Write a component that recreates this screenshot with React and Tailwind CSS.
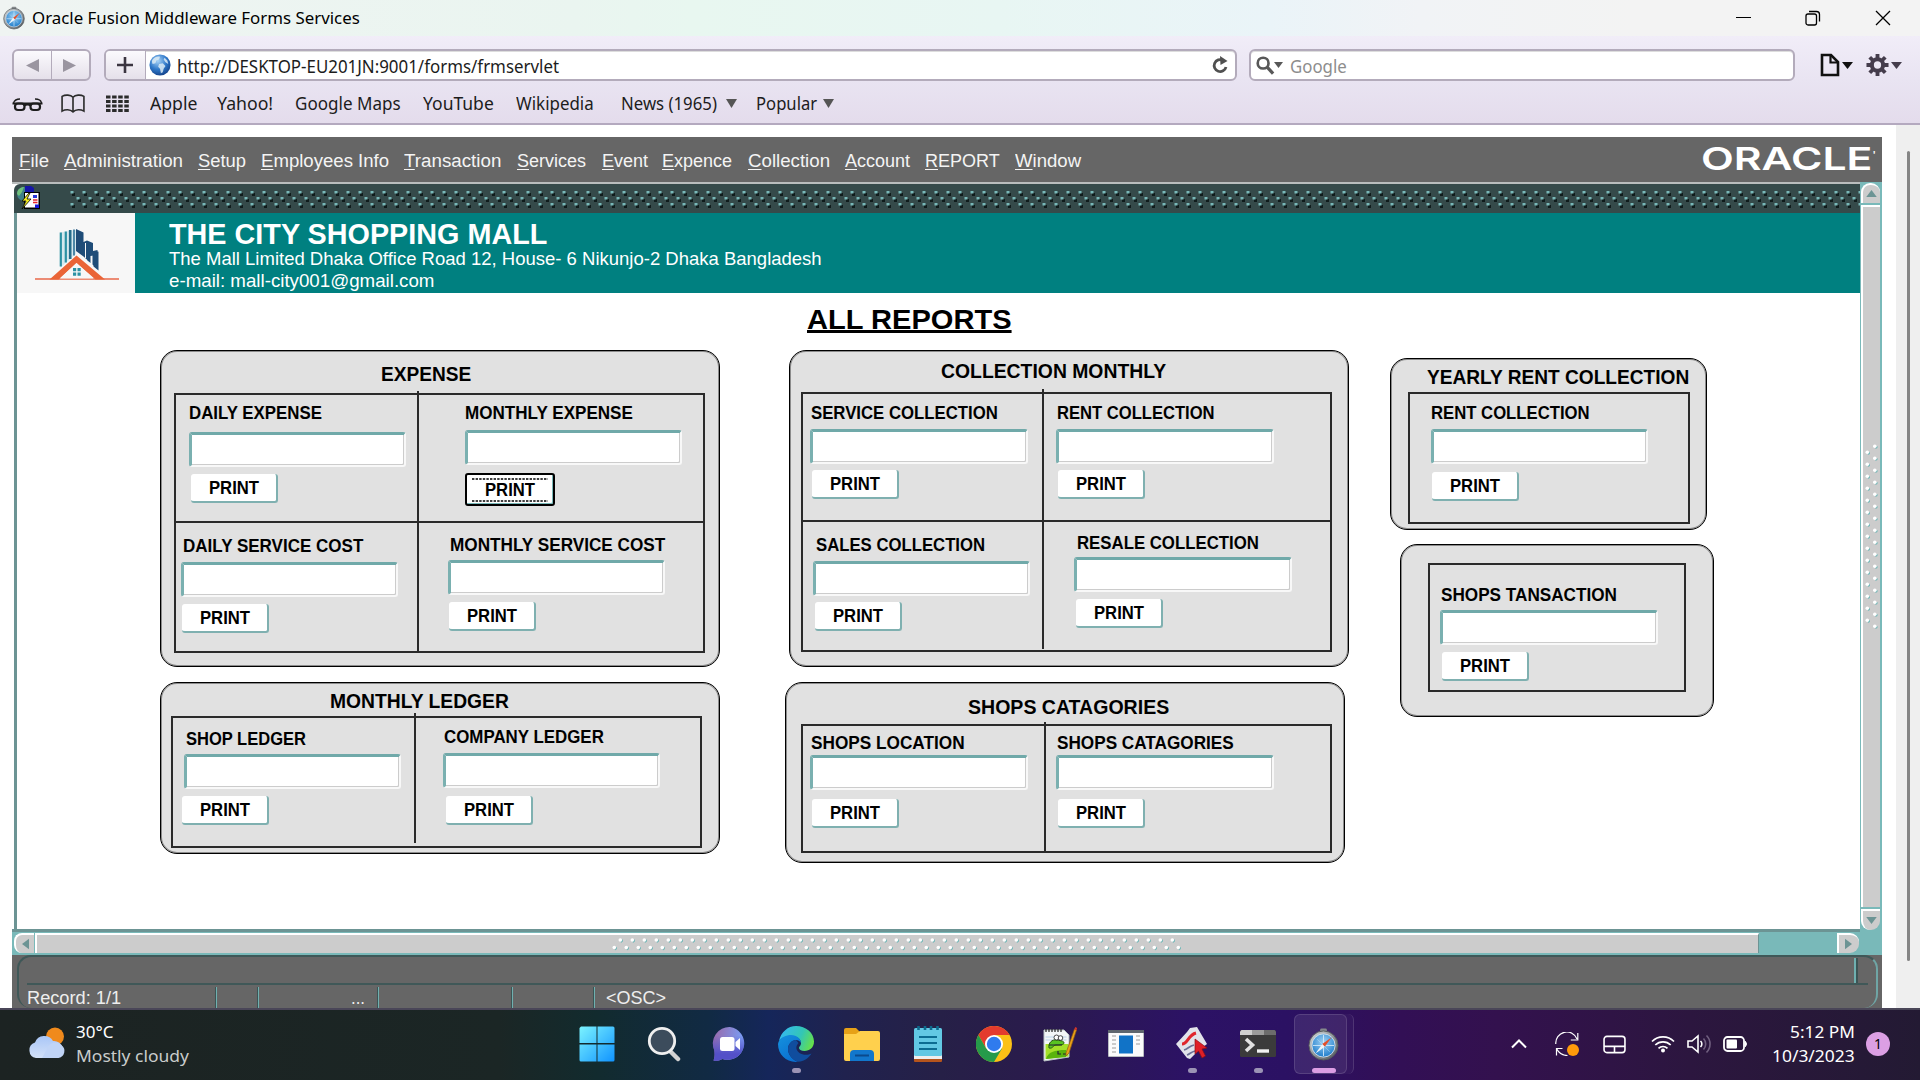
import React, { useLayoutEffect, useRef, useState } from "react";

/* Text condensed or stretched horizontally to fill the width of its box. */
function Fit({ className = "", children }) {
  const box = useRef(null);
  const text = useRef(null);
  const [scale, setScale] = useState(1);
  useLayoutEffect(() => {
    const natural = text.current.offsetWidth;
    if (natural) setScale(box.current.clientWidth / natural);
  }, []);
  return (
    <span ref={box} className={"block shrink-0 " + className}>
      <span ref={text} className="inline-block origin-left whitespace-pre" style={{ transform: `scaleX(${scale})` }}>
        {children}
      </span>
    </span>
  );
}

const Caret = ({ className = "" }) => (
  <svg viewBox="0 0 10 8" preserveAspectRatio="none" className={"shrink-0 " + className}>
    <path d="M0 0h10L5 8z" fill="currentColor" />
  </svg>
);

function Compass({ className }) {
  return (
    <svg viewBox="0 0 32 34" className={className}>
      <defs>
        <radialGradient id="compassBlue" cx="50%" cy="35%" r="65%">
          <stop offset="0" stopColor="#9fd2f4" />
          <stop offset="1" stopColor="#1f7dcb" />
        </radialGradient>
        <linearGradient id="compassRim" x1="0" y1="0" x2="1" y2="1">
          <stop offset="0" stopColor="#d8dcde" />
          <stop offset="1" stopColor="#4c5257" />
        </linearGradient>
      </defs>
      <rect x="12.500" y="0.500" width="7" height="4" rx="1.500" fill="#85898c" />
      <circle cx="16" cy="18" r="15" fill="url(#compassRim)" stroke="#55595c" strokeWidth="1" />
      <circle cx="16" cy="18" r="12" fill="url(#compassBlue)" stroke="#e9eef2" strokeWidth="0.800" />
      <path d="M16 7v22M5 18h22" stroke="#d6ecfa" strokeWidth="0.900" />
      <path d="M9.500 11.500l13 13M22.500 11.500l-13 13" stroke="#bfe0f5" strokeWidth="0.500" />
      <path d="M24.500 9.500l-7.200 9.700-2.600-2.600z" fill="#e2502c" />
      <path d="M7.500 26.500l7.200-9.700 2.600 2.600z" fill="#eef4f8" />
    </svg>
  );
}

function Globe() {
  return (
    <svg viewBox="0 0 24 24" className="h-[22px] w-[22px] shrink-0">
      <defs>
        <radialGradient id="globe" cx="40%" cy="30%" r="75%">
          <stop offset="0" stopColor="#a9d4f7" />
          <stop offset="0.550" stopColor="#2f78c9" />
          <stop offset="1" stopColor="#123f86" />
        </radialGradient>
      </defs>
      <circle cx="12" cy="12" r="11.500" fill="url(#globe)" />
      <path d="M4 6c2-3 6-4 8-3l-1 3-3 1-1 3-3 1c-1-2-1-4 0-5zM11 11l4-1 3 3-2 3-1 4-2 1-1-5-2-2zM17 4l3 3 1 4-3-2-2-3z" fill="#dcebf4" opacity="0.850" />
    </svg>
  );
}

function TitleBar() {
  return (
    <div className="flex h-[36px] items-center bg-[linear-gradient(90deg,#eff4f2_0%,#eaf5f0_30%,#e8f7f0_36%,#e8f6f3_52%,#eaf4f8_66%,#f1f3f6_74%,#f3f3f3_85%)] pl-[3px]">
      <Compass className="h-[24px] w-[22px]" />
      <Fit className="-mt-px ml-[7px] w-[328px] text-[16.5px] leading-[24px] text-black">Oracle Fusion Middleware Forms Services</Fit>
      <div className="ml-auto flex items-center text-black">
        <svg viewBox="0 0 16 16" className="h-[16px] w-[16px]"><path d="M0 7.500h15" stroke="#000" strokeWidth="1" /></svg>
        <svg viewBox="0 0 16 16" className="-mt-px ml-[53px] h-[16px] w-[16px]" fill="none" stroke="#000" strokeWidth="1.300">
          <rect x="1" y="4" width="10.500" height="11" rx="2" />
          <path d="M4 1.500h7.500a3 3 0 0 1 3 3v7" />
        </svg>
        <svg viewBox="0 0 16 16" className="-mt-px ml-[54px] mr-[29px] h-[16px] w-[16px]" stroke="#000" strokeWidth="1.300"><path d="M1 1l14 14M15 1L1 15" /></svg>
      </div>
    </div>
  );
}

function BrowserBar() {
  return (
    <div className="flex h-[89px] flex-col border-b-2 border-[#b4a9bf] bg-[linear-gradient(180deg,#f1edf8_0%,#e9e4f2_50%,#e4dcec_100%)] pt-[13px]">
      <div className="flex h-[32px] items-stretch pl-[12px]">
        <div className="flex w-[79px] rounded-[6px] border-2 border-[#b3abbb] bg-[linear-gradient(180deg,#fbfafd,#e5e0ea)] text-[#9a95a0]">
          <div className="flex flex-1 items-center justify-center border-r border-[#b3abbb]">
            <svg viewBox="0 0 12 12" className="h-[13px] w-[13px]"><path d="M12 0v12L0 6z" fill="currentColor" /></svg>
          </div>
          <div className="flex flex-1 items-center justify-center">
            <svg viewBox="0 0 12 12" className="-ml-[2px] h-[13px] w-[13px]"><path d="M0 0v12l12-6z" fill="currentColor" /></svg>
          </div>
        </div>
        <div className="ml-[13px] flex w-[1133px] items-center overflow-hidden rounded-[6px] border-2 border-[#b3abbb] bg-white shadow-[inset_0_1px_0_#dddddd]">
          <div className="flex h-full w-[40px] shrink-0 items-center justify-center border-r border-[#b3abbb] bg-[linear-gradient(180deg,#fbfafd,#e5e0ea)]">
            <svg viewBox="0 0 16 16" className="-ml-[2px] h-[16px] w-[16px]"><path d="M8 0v16M0 8h16" stroke="#3b3540" strokeWidth="2.600" /></svg>
          </div>
          <div className="ml-[3px]"><Globe /></div>
          <Fit className="ml-[6px] mt-px w-[382px] text-[18px] leading-[24px] text-[#1c1c1c]">http://DESKTOP-EU201JN:9001/forms/frmservlet</Fit>
          <svg viewBox="0 0 16 18" className="ml-auto mr-[7px] h-[18px] w-[16px]" fill="none">
            <path d="M11 4.300A6 6 0 1 0 14 11" stroke="#505050" strokeWidth="2.800" />
            <path d="M8 0L15.500 5 8.500 9z" fill="#505050" />
          </svg>
        </div>
        <div className="ml-[12px] flex w-[546px] items-center rounded-[6px] border-2 border-[#b3abbb] bg-white pl-[5px] shadow-[inset_0_1px_0_#dddddd]">
          <svg viewBox="0 0 20 20" className="h-[19px] w-[19px]" fill="none" stroke="#585858">
            <circle cx="7.500" cy="7.500" r="5.700" strokeWidth="2.800" />
            <path d="M11.500 11.500L18 18.500" strokeWidth="3.400" />
          </svg>
          <Caret className="-ml-px h-[6px] w-[9px] text-[#585858]" />
          <Fit className="ml-[7px] mt-px w-[57px] text-[18px] leading-[24px] text-[#8d8d8d]">Google</Fit>
        </div>
        <div className="ml-[25px] flex items-center">
          <svg viewBox="0 0 20 24" className="h-[24px] w-[20px]" fill="none" stroke="#111" strokeWidth="2.600">
            <path d="M2 2h9l7 7v13H2z" />
            <path d="M10.500 2v7.500H18" strokeWidth="2.200" />
          </svg>
          <Caret className="ml-[2px] h-[7px] w-[11px] text-[#111]" />
          <svg viewBox="0 0 24 24" className="ml-[13px] h-[24px] w-[23px]">
            <g stroke="#453d4c" strokeWidth="4">
              <path d="M12 0.500v23M0.500 12h23M3.900 3.900l16.200 16.200M20.100 3.900L3.900 20.100" />
            </g>
            <circle cx="12" cy="12" r="8" fill="#453d4c" />
            <circle cx="12" cy="12" r="3.800" fill="#ece8f4" />
          </svg>
          <Caret className="ml-[2px] h-[7px] w-[11px] text-[#453d4c]" />
        </div>
      </div>
      <div className="mt-[10px] flex h-[24px] items-center pl-[12px] text-[18px] leading-[24px] text-[#1c1c1c]">
        <svg viewBox="0 0 31 16" className="mt-[2px] h-[16px] w-[31px]" fill="none" stroke="#1d1d1d" strokeWidth="2.200">
          <rect x="3" y="7.500" width="9.500" height="6.500" rx="3" />
          <rect x="18.500" y="7.500" width="9.500" height="6.500" rx="3" />
          <path d="M0.500 7.500h30M12.500 9.500c1.500-1.300 4.500-1.300 6 0" strokeWidth="2" />
          <path d="M1.500 7C2.500 4 4.500 3 8 3M29.500 7C29 4 27 3 23 3" strokeWidth="1.300" />
        </svg>
        <svg viewBox="0 0 26 20" className="ml-[17px] h-[19px] w-[26px]" fill="none" stroke="#2b2b2b" strokeWidth="1.700">
          <path d="M13 3.500C10.500 0.800 5 0.500 1.500 2.500v15.500c3.500-2 8.500-2 11.500 0.800 3-2.800 8-2.800 11.500-0.800V2.500C21 0.500 15.500 0.800 13 3.500zM13 3.500v15" />
        </svg>
        <svg viewBox="0 0 23 17" className="ml-[20px] mt-px h-[17px] w-[23px]">
          <path d="M0 2h23M0 6.500h23M0 11h23M0 15.500h23" stroke="#2b2b2b" strokeWidth="3.200" strokeDasharray="4.500 1.600" />
        </svg>
        <Fit className="ml-[21px] w-[47px]">Apple</Fit>
        <Fit className="ml-[20px] w-[56px]">Yahoo!</Fit>
        <Fit className="ml-[22px] w-[106px]">Google Maps</Fit>
        <Fit className="ml-[22px] w-[71px]">YouTube</Fit>
        <Fit className="ml-[22px] w-[78px]">Wikipedia</Fit>
        <Fit className="ml-[27px] w-[96px]">News (1965)</Fit>
        <Caret className="ml-[9px] h-[9px] w-[11px] text-[#555]" />
        <Fit className="ml-[19px] w-[61px]">Popular</Fit>
        <Caret className="ml-[6px] h-[9px] w-[11px] text-[#555]" />
      </div>
    </div>
  );
}

const MENU = [
  ["File", "ml-[7px] w-[30px]"],
  ["Administration", "ml-[15px] w-[119px]"],
  ["Setup", "ml-[15px] w-[48px]"],
  ["Employees Info", "ml-[15px] w-[128px]"],
  ["Transaction", "ml-[15px] w-[97px]"],
  ["Services", "ml-[16px] w-[69px]"],
  ["Event", "ml-[16px] w-[46px]"],
  ["Expence", "ml-[14px] w-[70px]"],
  ["Collection", "ml-[16px] w-[82px]"],
  ["Account", "ml-[15px] w-[65px]"],
  ["REPORT", "ml-[15px] w-[75px]"],
  ["Window", "ml-[15px] w-[66px]"],
];

function MenuBar() {
  return (
    <div className="flex h-[45px] bg-[#666666] pt-[12px] text-[18px] leading-[24px] text-[#f4f4f4] [font-family:'Liberation_Sans',sans-serif]">
      {MENU.map(([name, cls]) => (
        <Fit key={name} className={cls}>
          <span className="underline decoration-1 underline-offset-2">{name[0]}</span>
          {name.slice(1)}
        </Fit>
      ))}
      <Fit className="ml-auto -mt-[6px] w-[172px] text-[31.5px] font-semibold leading-[32px] text-white [font-family:Inter,sans-serif]">ORACLE</Fit>
      <span className="-mt-[3px] mr-[4px] w-[5px] text-[10px] font-bold leading-[20px] text-white">'</span>
    </div>
  );
}

function StripDots() {
  return (
    <svg className="h-[18px] w-[1790px]">
      <defs>
        <pattern id="stripDots" width="12" height="18" patternUnits="userSpaceOnUse">
          <path d="M2 3h3v3H2zM2 15h3v3H2zM8 9h3v3H8z" fill="#101c1c" />
          <path d="M0.500 1h3v2.500h-3zM0.500 13h3v2.500h-3zM6.500 7h3v2.500h-3z" fill="#79b9b9" />
        </pattern>
      </defs>
      <rect width="1790" height="18" fill="url(#stripDots)" />
    </svg>
  );
}

function MallLogo() {
  return (
    <svg viewBox="0 0 118 80" className="h-[80px] w-[118px] shrink-0 bg-[#f7f7f7]">
      <path d="M43.500 19.500v35L59 41V17l-5 0.500-5 1z" fill="#d5e8ee" />
      <path d="M43.800 19.500v34M48.800 18.500v31" stroke="#2c91a3" strokeWidth="2.200" />
      <path d="M53.200 17v29" stroke="#246d8c" strokeWidth="2.600" />
      <path d="M57 16.500v26" stroke="#2a6f96" strokeWidth="1.600" />
      <path d="M59 16l7.500 3.500v9.500l3.500-1.500 6 2.500v9.500l4.500-1.500V56l-5-4.500V41l-3.500 2v5.500l-5.500-5-7.500-5.500z" fill="#1f4c78" />
      <path d="M70 33l6-1v6l4.500-1 0 2 1-0.500v19l-5-4V42.500l-3 0.500v7l-3.500-3z" fill="#1f4c78" />
      <path d="M68.500 30v15" stroke="#f7f7f7" strokeWidth="1" />
      <path d="M18 66h84" stroke="#e8694a" strokeWidth="1.500" />
      <path d="M59.500 42.500L88 66.500H78.500L59.500 50 41.500 66.500H32.500z" fill="#ea6437" />
      <path d="M59.500 50l17 15.500H43z" fill="#f7f7f7" />
      <path d="M56 55h3.200v3.200H56zM60.500 55h3.200v3.200h-3.200zM56 59.500h3.200v3.200H56zM60.500 59.500h3.200v3.200h-3.200z" fill="#2c91a3" />
    </svg>
  );
}

function AppletIcon() {
  return (
    <svg viewBox="0 0 25 25" className="ml-[2px] h-[25px] w-[25px] shrink-0">
      <circle cx="8" cy="8" r="7" fill="#3e7f86" />
      <path d="M1 8c0-5 4-7 7-7l-2 5-3 4z" fill="#6fc07c" />
      <path d="M9 0h6l3 2v4H9z" fill="#1616a8" />
      <rect x="8" y="6" width="16" height="17" fill="#000" />
      <rect x="9" y="7" width="13.500" height="14.500" fill="#fff" />
      <path d="M17 9h4v3h-4z" fill="#2a37d8" />
      <path d="M17 14h4.500M17 16.500h4.500" stroke="#e8262c" strokeWidth="1.300" />
      <path d="M19 18.500h4V22h-4z" fill="#1616d8" />
      <path d="M13 7l-7 8h4l-4 8 9-10h-4l3-6z" fill="#f3ec1c" stroke="#000" strokeWidth="0.800" />
    </svg>
  );
}

const FocusLine = () => (
  <svg viewBox="0 0 76 2" className="h-[2px] w-[76px]">
    <path d="M0 1h76" stroke="#000" strokeWidth="1.500" strokeDasharray="2.400 1.200" />
  </svg>
);

function PrintButton({ className, focused }) {
  if (focused) {
    return (
      <button className={"flex h-[33px] w-[90px] flex-col items-center rounded-[3px] border-2 border-black bg-white pt-[3px] shadow-[inset_-1px_-1px_0_#79b9b9] " + className}>
        <FocusLine />
        <Fit className="w-[50px] text-[19px] font-bold leading-[20px]">PRINT</Fit>
        <FocusLine />
      </button>
    );
  }
  return (
    <button className={"flex h-[29px] w-[87px] items-center justify-center rounded-[3px] border-b-2 border-r-2 border-[#7fb0b0] bg-white pt-px " + className}>
      <Fit className="w-[50px] text-[19px] font-bold leading-[20px]">PRINT</Fit>
    </button>
  );
}

/* One report: caption, parameter field and its print button. */
function Entry({ label, labelClass, fieldClass, buttonClass, focused }) {
  return (
    <div className="flex flex-col items-start">
      <Fit className={"text-[19px] font-bold leading-[20px] " + labelClass}>{label}</Fit>
      <div className={"h-[35px] w-[217px] rounded-[3px] border-b-2 border-l-[3px] border-r-2 border-t-[3px] border-b-[#f8f8f8] border-l-[#7ab0b0] border-r-[#f8f8f8] border-t-[#70a9a9] bg-white shadow-[inset_-1px_-1px_0_#cccccc] " + fieldClass} />
      <PrintButton className={buttonClass} focused={focused} />
    </div>
  );
}

function Panel({ className, title, titleClass, gridClass, lineClass, children }) {
  return (
    <section className={"flex flex-col items-start rounded-[17px] border border-black bg-[#e1e1e1] p-px shadow-[inset_0_0_0_1px_#8c8c8c] " + className}>
      {title && <Fit className={"relative -top-px text-[21px] font-bold leading-[24px] " + titleClass}>{title}</Fit>}
      <div className={"relative grid border-2 border-[#2a2a2a] " + gridClass}>
        {children}
        {lineClass && <span className={"absolute w-[2px] bg-[#2a2a2a] " + lineClass} />}
      </div>
    </section>
  );
}

const RowLine = ({ className }) => <span className={"absolute left-0 h-[2px] w-full bg-[#2a2a2a] " + className} />;

function Reports() {
  return (
    <div className="mt-[15px] flex items-start">
      <div className="ml-[143px] flex flex-col gap-[15px]">
        <Panel className="h-[317px] w-[560px]" title="EXPENSE" titleClass="ml-[219px] mt-[11px] w-[90px]" gridClass="ml-[12px] mt-[6px] h-[260px] w-[531px] grid-cols-[242px_1fr] grid-rows-[126px_1fr]" lineClass="left-[241px] -top-[4px] bottom-0">
          <Entry label="DAILY EXPENSE" labelClass="ml-[13px] mt-[8px] w-[133px]" fieldClass="ml-[13px] mt-[9px]" buttonClass="ml-[15px] mt-[7px]" />
          <Entry focused label="MONTHLY EXPENSE" labelClass="ml-[47px] mt-[8px] w-[168px]" fieldClass="ml-[47px] mt-[7px]" buttonClass="ml-[47px] mt-[8px]" />
          <Entry label="DAILY SERVICE COST" labelClass="ml-[7px] mt-[15px] w-[180px]" fieldClass="ml-[5px] mt-[6px]" buttonClass="ml-[6px] mt-[7px]" />
          <Entry label="MONTHLY SERVICE COST" labelClass="ml-[32px] mt-[14px] w-[215px]" fieldClass="ml-[30px] mt-[5px]" buttonClass="ml-[31px] mt-[7px]" />
          <RowLine className="top-[126px]" />
        </Panel>
        <Panel className="h-[172px] w-[560px]" title="MONTHLY LEDGER" titleClass="ml-[168px] mt-[6px] w-[179px]" gridClass="ml-[9px] mt-[2px] h-[132px] w-[531px] grid-cols-[241px_1fr]" lineClass="left-[241px] -top-[5px] bottom-[3px]">
          <Entry label="SHOP LEDGER" labelClass="ml-[13px] mt-[11px] w-[120px]" fieldClass="ml-[11px] mt-[5px]" buttonClass="ml-[9px] mt-[7px]" />
          <Entry label="COMPANY LEDGER" labelClass="ml-[30px] mt-[9px] w-[160px]" fieldClass="ml-[29px] mt-[6px]" buttonClass="ml-[32px] mt-[8px]" />
        </Panel>
      </div>
      <div className="ml-[65px] flex flex-col gap-[15px]">
        <Panel className="ml-[4px] h-[317px] w-[560px]" title="COLLECTION MONTHLY" titleClass="ml-[150px] mt-[8px] w-[225px]" gridClass="ml-[10px] mt-[8px] h-[260px] w-[531px] grid-cols-[240px_1fr] grid-rows-[125px_1fr]" lineClass="left-[239px] -top-[5px] bottom-[1px]">
          <Entry label="SERVICE COLLECTION" labelClass="ml-[8px] mt-[9px] w-[187px]" fieldClass="ml-[7px] mt-[6px] w-[218px]" buttonClass="ml-[9px] mt-[6px]" />
          <Entry label="RENT COLLECTION" labelClass="ml-[14px] mt-[9px] w-[158px]" fieldClass="ml-[13px] mt-[6px] w-[218px]" buttonClass="ml-[15px] mt-[6px]" />
          <Entry label="SALES COLLECTION" labelClass="ml-[13px] mt-[16px] w-[169px]" fieldClass="ml-[10px] mt-[6px]" buttonClass="ml-[12px] mt-[6px]" />
          <Entry label="RESALE COLLECTION" labelClass="ml-[34px] mt-[14px] w-[182px]" fieldClass="ml-[31px] mt-[4px] w-[218px]" buttonClass="ml-[33px] mt-[7px]" />
          <RowLine className="top-[126px]" />
        </Panel>
        <Panel className="h-[181px] w-[560px]" title="SHOPS CATAGORIES" titleClass="ml-[181px] mt-[12px] w-[201px]" gridClass="ml-[14px] mt-[4px] h-[129px] w-[531px] grid-cols-[241px_1fr]" lineClass="left-[241px] -top-[4px] bottom-0">
          <Entry label="SHOPS LOCATION" labelClass="ml-[8px] mt-[7px] w-[154px]" fieldClass="ml-[7px] mt-[2px] w-[218px]" buttonClass="ml-[9px] mt-[9px]" />
          <Entry label="SHOPS CATAGORIES" labelClass="ml-[13px] mt-[7px] w-[177px]" fieldClass="ml-[12px] mt-[2px] w-[218px]" buttonClass="ml-[14px] mt-[9px]" />
        </Panel>
      </div>
      <div className="ml-[41px] flex flex-col gap-[14px] pt-[8px]">
        <Panel className="h-[172px] w-[317px]" title="YEARLY RENT COLLECTION" titleClass="ml-[35px] mt-[6px] w-[262px]" gridClass="ml-[16px] mt-[2px] h-[132px] w-[282px]">
          <Entry label="RENT COLLECTION" labelClass="ml-[21px] mt-[9px] w-[159px]" fieldClass="ml-[21px] mt-[6px]" buttonClass="ml-[22px] mt-[8px]" />
        </Panel>
        <Panel className="ml-[10px] h-[173px] w-[314px]" gridClass="ml-[26px] mt-[17px] h-[129px] w-[258px]">
          <Entry label="SHOPS TANSACTION" labelClass="ml-[11px] mt-[20px] w-[176px]" fieldClass="ml-[10px] mt-[5px] w-[218px]" buttonClass="ml-[12px] mt-[7px]" />
        </Panel>
      </div>
    </div>
  );
}

function FormWindow() {
  return (
    <div className="flex h-[750px] w-[1848px] flex-col border-b-[3px] border-t-2 border-b-[#6c9494] border-t-[#b9bdbd]">
      <div className="ml-[2px] flex h-[29px] shrink-0 items-center overflow-hidden rounded-tl-[6px] bg-[#354a4a]">
        <AppletIcon />
        <div className="ml-[29px] flex"><StripDots /></div>
      </div>
      <div className="ml-[2px] flex flex-1 flex-col border-l-[3px] border-[#6c9494] bg-white">
        <header className="flex h-[80px] bg-[#008080] text-white">
          <MallLogo />
          <div className="flex flex-col pl-[34px] pt-[4px]">
            <Fit className="w-[378px] text-[29px] font-bold leading-[34px]">THE CITY SHOPPING MALL</Fit>
            <Fit className="-mt-[3px] w-[653px] text-[18.5px] leading-[22px]">The Mall Limited Dhaka Office Road 12, House- 6 Nikunjo-2 Dhaka Bangladesh</Fit>
            <Fit className="w-[265px] text-[18.5px] leading-[22px]">e-mail: mall-city001@gmail.com</Fit>
          </div>
        </header>
        <Fit className="ml-[790px] mt-[10px] h-[32px] w-[205px] text-[28.5px] font-bold leading-[32px]">
          <span className="underline decoration-[3px] underline-offset-[1px] [text-decoration-skip-ink:none]">ALL REPORTS</span>
        </Fit>
        <Reports />
      </div>
    </div>
  );
}

function Knurl({ vertical }) {
  return vertical ? (
    <svg className="h-[185px] w-[14px]">
      <defs>
        <pattern id="knurlV" width="14" height="12" patternUnits="userSpaceOnUse">
          <path d="M10 2l2.500 0v2l-2 1zM2.500 8l2.500 0v2l-2 1z" fill="#79b9b9" />
          <circle cx="9.800" cy="2.300" r="1.800" fill="#fff" />
          <circle cx="2.300" cy="8.300" r="1.800" fill="#fff" />
        </pattern>
      </defs>
      <rect width="14" height="185" fill="url(#knurlV)" />
    </svg>
  ) : (
    <svg className="h-[14px] w-[570px]">
      <defs>
        <pattern id="knurlH" width="12" height="14" patternUnits="userSpaceOnUse">
          <path d="M8 3l3-0.500v2l-2 1.500zM2 10.500l3-0.500v2l-2 1.500z" fill="#79b9b9" />
          <circle cx="8.300" cy="3" r="1.800" fill="#fff" />
          <circle cx="2.300" cy="10.500" r="1.800" fill="#fff" />
        </pattern>
      </defs>
      <rect width="570" height="14" fill="url(#knurlH)" />
    </svg>
  );
}

function VerticalScroll() {
  return (
    <div className="flex h-[750px] w-[22px] flex-col border-x border-[#79b9b9] bg-[#79b9b9] pr-px pt-px">
      <div className="flex h-[20px] items-center justify-center rounded-t-[9px] border-l-2 border-t-2 border-white bg-[#cccccc]">
        <svg viewBox="0 0 12 8" className="-mt-px h-[7px] w-[11px]"><path d="M0 8h12L6 0z" fill="#6c9494" /></svg>
      </div>
      <div className="mt-[2px] flex h-[702px] items-center justify-center border-l-2 border-t-2 border-white bg-[#cccccc]">
        <div className="-mt-[41px] flex"><Knurl vertical /></div>
      </div>
      <div className="mt-[2px] flex h-[21px] items-center justify-center rounded-b-[9px] border-l-2 border-t-2 border-white bg-[#cccccc]">
        <svg viewBox="0 0 12 8" className="h-[7px] w-[11px]"><path d="M0 0h12L6 8z" fill="#6c9494" /></svg>
      </div>
    </div>
  );
}

function HorizontalScroll() {
  return (
    <div className="flex h-[23px] items-stretch bg-[#79b9b9] pb-[2px] pl-[2px] pt-px">
      <div className="flex w-[20px] items-center justify-center rounded-l-[8px] border-l-2 border-t-2 border-white bg-[#cccccc]">
        <svg viewBox="0 0 8 12" className="h-[12px] w-[7px]"><path d="M8 0v12L0 6z" fill="#6c9494" /></svg>
      </div>
      <div className="ml-px flex w-[1724px] items-center border-l-2 border-r border-t-2 border-l-white border-r-[#6c9494] border-t-white bg-[#cccccc]">
        <div className="ml-[575px] flex"><Knurl /></div>
      </div>
      <div className="ml-[78px] flex w-[22px] items-center justify-center rounded-r-[9px] border-l-2 border-t-2 border-white bg-[#cccccc]">
        <svg viewBox="0 0 8 12" className="-ml-[2px] h-[12px] w-[7px]"><path d="M0 0v12l8-6z" fill="#6c9494" /></svg>
      </div>
    </div>
  );
}

const Cell = ({ className, children }) => (
  <div className={"flex h-full border-r border-[#6fb0b0] shadow-[inset_-1px_0_0_#3c5454] " + className}>{children}</div>
);

function StatusBar() {
  return (
    <div className="flex h-[53px] bg-[#666666] pl-[5px] pr-[4px] text-[18px] leading-[24px] text-[#eeeeee]">
      <div className="flex flex-1 flex-col rounded-[14px] border-2 border-b-0 border-[#3f5858] border-r-[#6fa5a5] px-[8px]">
        <div className="flex h-[28px] items-stretch justify-end border-b-2 border-[#405858] pr-[10px] pt-px">
          <span className="w-[4px] border-l-2 border-r-2 border-l-[#6fb0b0] border-r-[#3c5454]" />
        </div>
        <div className="flex h-[23px] items-stretch pt-[2px]">
          <Cell className="w-[190px]"><Fit className="w-[94px] leading-[22px]">Record: 1/1</Fit></Cell>
          <Cell className="w-[42px]" />
          <Cell className="w-[120px] justify-end pr-[13px]"><Fit className="w-[14px] leading-[22px]">...</Fit></Cell>
          <Cell className="w-[134px]" />
          <Cell className="w-[82px]" />
          <Fit className="ml-[11px] w-[60px] leading-[22px]">&lt;OSC&gt;</Fit>
        </div>
      </div>
    </div>
  );
}

const StartIcon = () => (
  <svg viewBox="0 0 36 36" className="h-[36px] w-[36px]">
    <defs>
      <linearGradient id="win" gradientUnits="userSpaceOnUse" x1="0" y1="0" x2="36" y2="36">
        <stop offset="0" stopColor="#7df5ff" />
        <stop offset="1" stopColor="#0f92ff" />
      </linearGradient>
    </defs>
    <path d="M2 0.500h15.500v16.500H0.500V2zM18.500 0.500H34q1.500 0 1.500 1.500v15h-17zM0.500 18.500h17v17H2q-1.500 0-1.500-1.500zM18.500 18.500h17V34q0 1.500-1.500 1.500H18.500z" fill="url(#win)" />
  </svg>
);
const SearchIcon = () => (
  <svg viewBox="0 0 36 36" className="h-[36px] w-[36px]" fill="none">
    <path d="M24 25l8 8" stroke="#d2d2d2" strokeWidth="4.500" strokeLinecap="round" />
    <circle cx="16" cy="15" r="12.700" fill="#3c4c5c" stroke="#efefef" strokeWidth="2.800" />
  </svg>
);
const ChatIcon = () => (
  <svg viewBox="0 0 36 36" className="h-[36px] w-[36px]">
    <defs>
      <linearGradient id="chat" x1="0" y1="0.100" x2="0.900" y2="0.300">
        <stop offset="0" stopColor="#9a68a8" />
        <stop offset="1" stopColor="#7b9af0" />
      </linearGradient>
      <linearGradient id="chatLow" x1="0" y1="0" x2="0" y2="1">
        <stop offset="0.250" stopColor="#5050c8" stopOpacity="0" />
        <stop offset="0.800" stopColor="#5450c8" />
      </linearGradient>
    </defs>
    <path d="M18 1a16.500 16.500 0 1 1-7.500 32C7 35 3 35 1.500 34.500 2.500 32 3 29 2.200 24A16.500 16.500 0 0 1 18 1z" fill="url(#chat)" />
    <path d="M18 1a16.500 16.500 0 1 1-7.500 32C7 35 3 35 1.500 34.500 2.500 32 3 29 2.200 24A16.500 16.500 0 0 1 18 1z" fill="url(#chatLow)" />
    <rect x="8" y="11" width="14.500" height="14" rx="2.500" fill="#fff" />
    <path d="M23.500 16l4.500-4v12l-4.500-4z" fill="#fff" />
  </svg>
);
const EdgeIcon = () => (
  <svg viewBox="0 0 36 36" className="h-[36px] w-[36px]">
    <defs>
      <linearGradient id="edgeTop" x1="0" y1="0.300" x2="1" y2="0.600">
        <stop offset="0" stopColor="#35b8f1" />
        <stop offset="0.600" stopColor="#33c6b5" />
        <stop offset="1" stopColor="#66e04a" />
      </linearGradient>
      <linearGradient id="edgeLow" x1="0" y1="0" x2="0.600" y2="1">
        <stop offset="0" stopColor="#1592de" />
        <stop offset="1" stopColor="#0a6fd0" />
      </linearGradient>
    </defs>
    <path d="M1 15C3 6 10 0 18 0c10 0 18 7 18 15.500 0 6-4.500 9.500-9.500 9.500-3.500 0-5.500-1.500-5.500-3 0-1.500 2-2 2-5 0-4-4-7-10-7-5 0-9 1.500-12 5z" fill="url(#edgeTop)" />
    <path d="M0.500 16C3 11 8 9 13 9c6 0 10 4 10 8-1-2-3-3-5-3-4 0-8 4-8 9 0 6 5 11 10 12.800C9 37 0 29 0 18z" fill="url(#edgeLow)" />
    <path d="M18 14c-4 0-8 4-8 9 0 6 5 11 10 12.800 6 0 11-4 13.500-8.300-4 2-9 1.500-12-0.500-4-3-4-7-1-10z" fill="#104d9e" />
  </svg>
);
const FolderIcon = () => (
  <svg viewBox="0 0 36 36" className="h-[36px] w-[36px]">
    <path d="M0 4q0-2 2-2h10l4 4-3 4H0z" fill="#e6a117" />
    <path d="M0 8h12l4-3h18q2 0 2 2v26q0 2-2 2H2q-2 0-2-2z" fill="#ffd04d" />
    <path d="M6 35V28q0-4 4-4h16q4 0 4 4v7z" fill="#1277cc" />
    <path d="M11 29.500h14" stroke="#0b4a8c" strokeWidth="2" />
  </svg>
);
const NotepadIcon = () => (
  <svg viewBox="0 0 36 36" className="h-[36px] w-[36px]">
    <rect x="4" y="30" width="28" height="6" rx="1" fill="#b5541c" />
    <rect x="4" y="29" width="28" height="4" fill="#eee" />
    <rect x="4" y="2" width="28" height="28" rx="1.500" fill="#62c8e4" />
    <path d="M8.500 0v4M15 0v4M21 0v4M27.500 0v4" stroke="#0d6a8c" strokeWidth="2.600" />
    <path d="M9 11h18M9 17h18M9 23h18" stroke="#0b6c92" strokeWidth="2" />
  </svg>
);
const ChromeIcon = () => (
  <svg viewBox="0 0 36 36" className="h-[36px] w-[36px]">
    <circle cx="18" cy="18" r="18" fill="#fbc116" />
    <path d="M2.400 9A18 18 0 0 1 33.600 9H18L10 22z" fill="#e33b2e" />
    <path d="M2.400 9A18 18 0 0 0 18 36l8-13.500H10.200z" fill="#259a4a" />
    <circle cx="18" cy="18" r="9" fill="#fff" />
    <circle cx="18" cy="18" r="7.200" fill="#2f7bee" />
  </svg>
);
const NppIcon = () => (
  <svg viewBox="0 0 36 36" className="h-[36px] w-[36px]">
    <path d="M2 4h20l5 5v22L2 35z" fill="#f3f6f7" stroke="#b9c2c4" />
    <path d="M3.500 11h21M3.500 14h21" stroke="#b9d3ea" />
    <path d="M3.500 18h23v12.500L3.500 33z" fill="#a5e02a" />
    <path d="M4 33c2-7 8-9 20-9v7z" fill="#59b30c" />
    <path d="M7 22c-1-5 3-9 8-8s7 1 7 3-5 2-8 2-3 4-7 3z" fill="#58c322" stroke="#2b5c10" />
    <circle cx="14.500" cy="11.500" r="2.500" fill="#fff" stroke="#222" strokeWidth="0.800" />
    <circle cx="18.500" cy="12" r="2.300" fill="#fff" stroke="#222" strokeWidth="0.800" />
    <path d="M4 3v3M7 3v3M10 3v3M13 3v3M16 3v3M19 3v3" stroke="#222" strokeWidth="1.200" />
    <path d="M7 19h13M16 25v3h3M21 28h3" stroke="#223" strokeWidth="1.200" fill="none" />
    <path d="M24 27l8.500-24 2 1L27 27l-3 3z" fill="#e9a117" stroke="#8b5a12" strokeWidth="0.700" />
    <path d="M32.300 3.500l0.900-2.500 2 1-0.900 2.500z" fill="#d0342c" />
  </svg>
);
const WindowIcon = () => (
  <svg viewBox="0 0 36 36" className="h-[36px] w-[36px]">
    <rect x="0" y="4" width="36" height="27" rx="1" fill="#b9bdc2" />
    <rect x="0" y="4" width="36" height="3" fill="#5e666e" />
    <rect x="1" y="7" width="34" height="23" fill="#fbfbfb" />
    <rect x="11" y="9.500" width="14" height="18" fill="#1173c7" />
    <path d="M4 10h4M4 14h4M4 18h4M4 22h4M4 26h4M28 10h4M28 14h4M28 18h4" stroke="#bcbcbc" strokeWidth="1.500" />
  </svg>
);
const ArrowPageIcon = () => (
  <svg viewBox="0 0 36 36" className="h-[36px] w-[36px]">
    <path d="M2 18L13 6l3-4 7-1 10 17-8 6-9 9-3-1z" fill="#e2e3ea" />
    <path d="M8 18c6 0 6-9 14-11" stroke="#e0262c" strokeWidth="3" fill="none" />
    <path d="M10 24c4-1 5-4 10-5M13 29c3-1 4-3 8-4" stroke="#6a6f95" strokeWidth="1.600" fill="none" />
    <path d="M21 13l12 9-5 1 3.500 7-3.500 2-3.500-7-3.500 3z" fill="#df1f26" stroke="#8c0e14" strokeWidth="0.700" />
  </svg>
);
const TerminalIcon = () => (
  <svg viewBox="0 0 36 36" className="h-[36px] w-[36px]">
    <rect x="0" y="4" width="36" height="27" rx="1.500" fill="#3b3b3b" />
    <path d="M1.500 4H12v5H0V5.500z" fill="#cfcfcf" />
    <path d="M12 4h12v5H12z" fill="#9c9c9c" />
    <path d="M24 4h10.500L36 5.500V9H24z" fill="#6c6c6c" />
    <path d="M6 13l6.500 6L6 25" stroke="#e2e2e2" strokeWidth="3.600" fill="none" />
    <path d="M17 25h12" stroke="#f2f2f2" strokeWidth="3.400" />
  </svg>
);

function TaskSlot({ mark, children }) {
  return (
    <div className="relative flex h-[60px] w-[66px] items-center justify-center">
      {children}
      {mark && <span className="absolute bottom-px left-[29px] h-[5px] w-[9px] rounded-full bg-[#9b93b5]" />}
    </div>
  );
}

function TaskBar() {
  return (
    <div className="flex h-[72px] items-start border-t-2 border-[#4a4658] bg-[linear-gradient(90deg,#1c2322_0%,#1b2625_26%,#122b2e_31%,#112a44_37%,#15265a_40%,#20224e_44%,#262047_49%,#2a1b4c_54%,#2c1265_62%,#2b1163_67%,#320f55_73%,#33114e_78%,#2c163f_88%,#231a33_100%)] pt-[4px] text-[17px] leading-[24px]">
      <div className="flex w-[564px] items-center pl-[28px] pt-[6px]">
        <svg viewBox="0 0 38 32" className="-mt-[3px] h-[32px] w-[38px]">
          <defs>
            <linearGradient id="cloud" x1="0" y1="0" x2="0" y2="1">
              <stop offset="0" stopColor="#a9c6f7" />
              <stop offset="1" stopColor="#d3e1f8" />
            </linearGradient>
          </defs>
          <circle cx="27" cy="9.500" r="9" fill="#f08a1c" />
          <path d="M8 31a8 8 0 0 1-1-15.500A10 10 0 0 1 25 14a9 9 0 0 1 5 17z" fill="url(#cloud)" />
          <path d="M20 20c3-5 9-6 13-2a7 7 0 0 1-3 13H14z" fill="#c0d4f6" />
        </svg>
        <div className="ml-[10px] flex flex-col">
          <Fit className="w-[37px] text-white">30°C</Fit>
          <Fit className="w-[113px] text-[#c9cccb]">Mostly cloudy</Fit>
        </div>
      </div>
      <div className="flex">
        <TaskSlot><StartIcon /></TaskSlot>
        <div className="flex pl-px">
          <TaskSlot><SearchIcon /></TaskSlot>
          <TaskSlot><ChatIcon /></TaskSlot>
          <TaskSlot mark><EdgeIcon /></TaskSlot>
          <TaskSlot><FolderIcon /></TaskSlot>
          <TaskSlot><NotepadIcon /></TaskSlot>
          <TaskSlot><ChromeIcon /></TaskSlot>
          <TaskSlot><NppIcon /></TaskSlot>
          <TaskSlot><WindowIcon /></TaskSlot>
          <TaskSlot mark><ArrowPageIcon /></TaskSlot>
          <TaskSlot mark><TerminalIcon /></TaskSlot>
        </div>
        <div className="ml-[3px] flex h-[60px] w-[60px] rounded-[6px] border-r border-[#ffffff22] bg-[#ffffff08]">
          <div className="relative flex w-[53px] shrink-0 items-center justify-center rounded-[6px] border border-[#ffffff20] bg-[#ffffff10] pl-[6px]">
            <Compass className="h-[33px] w-[31px]" />
            <span className="absolute bottom-0 left-[17px] h-[5px] w-[24px] rounded-full bg-[#dc9ee4]" />
          </div>
        </div>
      </div>
      <div className="ml-auto flex h-[60px] items-center">
        <svg viewBox="0 0 16 10" className="h-[10px] w-[16px]" fill="none" stroke="#fff" strokeWidth="2"><path d="M1 8.500L8 1.500l7 7" /></svg>
        <svg viewBox="0 0 24 24" className="ml-[28px] h-[24px] w-[24px]" fill="none" stroke="#fff" strokeWidth="1.200">
          <path d="M0.800 12A11 11 0 0 1 22 7M22.800 1v7h-7M7.500 16.500H1.500v7M1.500 16.500C4 21.500 8 23.500 12.500 23.500" />
          <circle cx="18" cy="18" r="6" fill="#ff9a0a" stroke="none" />
        </svg>
        <svg viewBox="0 0 24 20" className="ml-[24px] h-[19px] w-[23px]" fill="none" stroke="#fff" strokeWidth="1.700">
          <rect x="1" y="1.500" width="22" height="17" rx="3" />
          <path d="M1 12h22M12 12v6" />
        </svg>
        <svg viewBox="0 0 24 18" className="ml-[25px] h-[18px] w-[24px]" fill="none" stroke="#fff" strokeWidth="1.700">
          <path d="M1 6.500a15.500 15.500 0 0 1 22 0M4.300 10a11 11 0 0 1 15.400 0M7.500 13.300a6.500 6.500 0 0 1 9 0" />
          <circle cx="12" cy="15.500" r="2" fill="#fff" stroke="none" />
        </svg>
        <svg viewBox="0 0 25 20" className="ml-[12px] h-[20px] w-[25px]" fill="none" stroke="#fff" strokeWidth="1.600">
          <path d="M1 7h4l6-5v16l-6-5H1z" />
          <path d="M13.500 7a4 4 0 0 1 0 6" />
          <path d="M16.500 4.500a8 8 0 0 1 0 11M19.500 1.500a12 12 0 0 1 0 17" stroke="#716080" />
        </svg>
        <svg viewBox="0 0 25 16" className="ml-[11px] h-[16px] w-[25px]" fill="none">
          <rect x="1" y="1" width="20" height="14" rx="3.500" stroke="#fff" strokeWidth="1.800" />
          <rect x="3.500" y="3.500" width="10.500" height="9" rx="1" fill="#fff" />
          <path d="M22 5.500h0.500q2 2.500 0 5H22z" fill="#fff" stroke="#fff" />
        </svg>
        <div className="ml-[24px] flex flex-col items-end text-white">
          <Fit className="w-[65px]">5:12 PM</Fit>
          <Fit className="w-[83px]">10/3/2023</Fit>
        </div>
        <div className="ml-[11px] mr-[30px] flex h-[24px] w-[24px] items-center justify-center rounded-full bg-[#dc9fe4] text-[14px] text-black">1</div>
      </div>
    </div>
  );
}

export default function App() {
  return (
    <div className="flex h-[1080px] w-[1920px] flex-col overflow-hidden bg-white text-black [font-family:'Noto_Sans',sans-serif]">
      <TitleBar />
      <BrowserBar />
      <div className="flex h-[883px]">
        <div className="flex w-[1896px] flex-col pl-[12px] pr-[14px] pt-[12px] [font-family:'Liberation_Sans',sans-serif]">
          <MenuBar />
          <div className="flex">
            <FormWindow />
            <VerticalScroll />
          </div>
          <HorizontalScroll />
          <StatusBar />
        </div>
        <div className="flex w-[24px] justify-center bg-[#efefef] pt-[26px]">
          <span className="h-[810px] w-[3px] rounded-full bg-[#858585]" />
        </div>
      </div>
      <TaskBar />
    </div>
  );
}
